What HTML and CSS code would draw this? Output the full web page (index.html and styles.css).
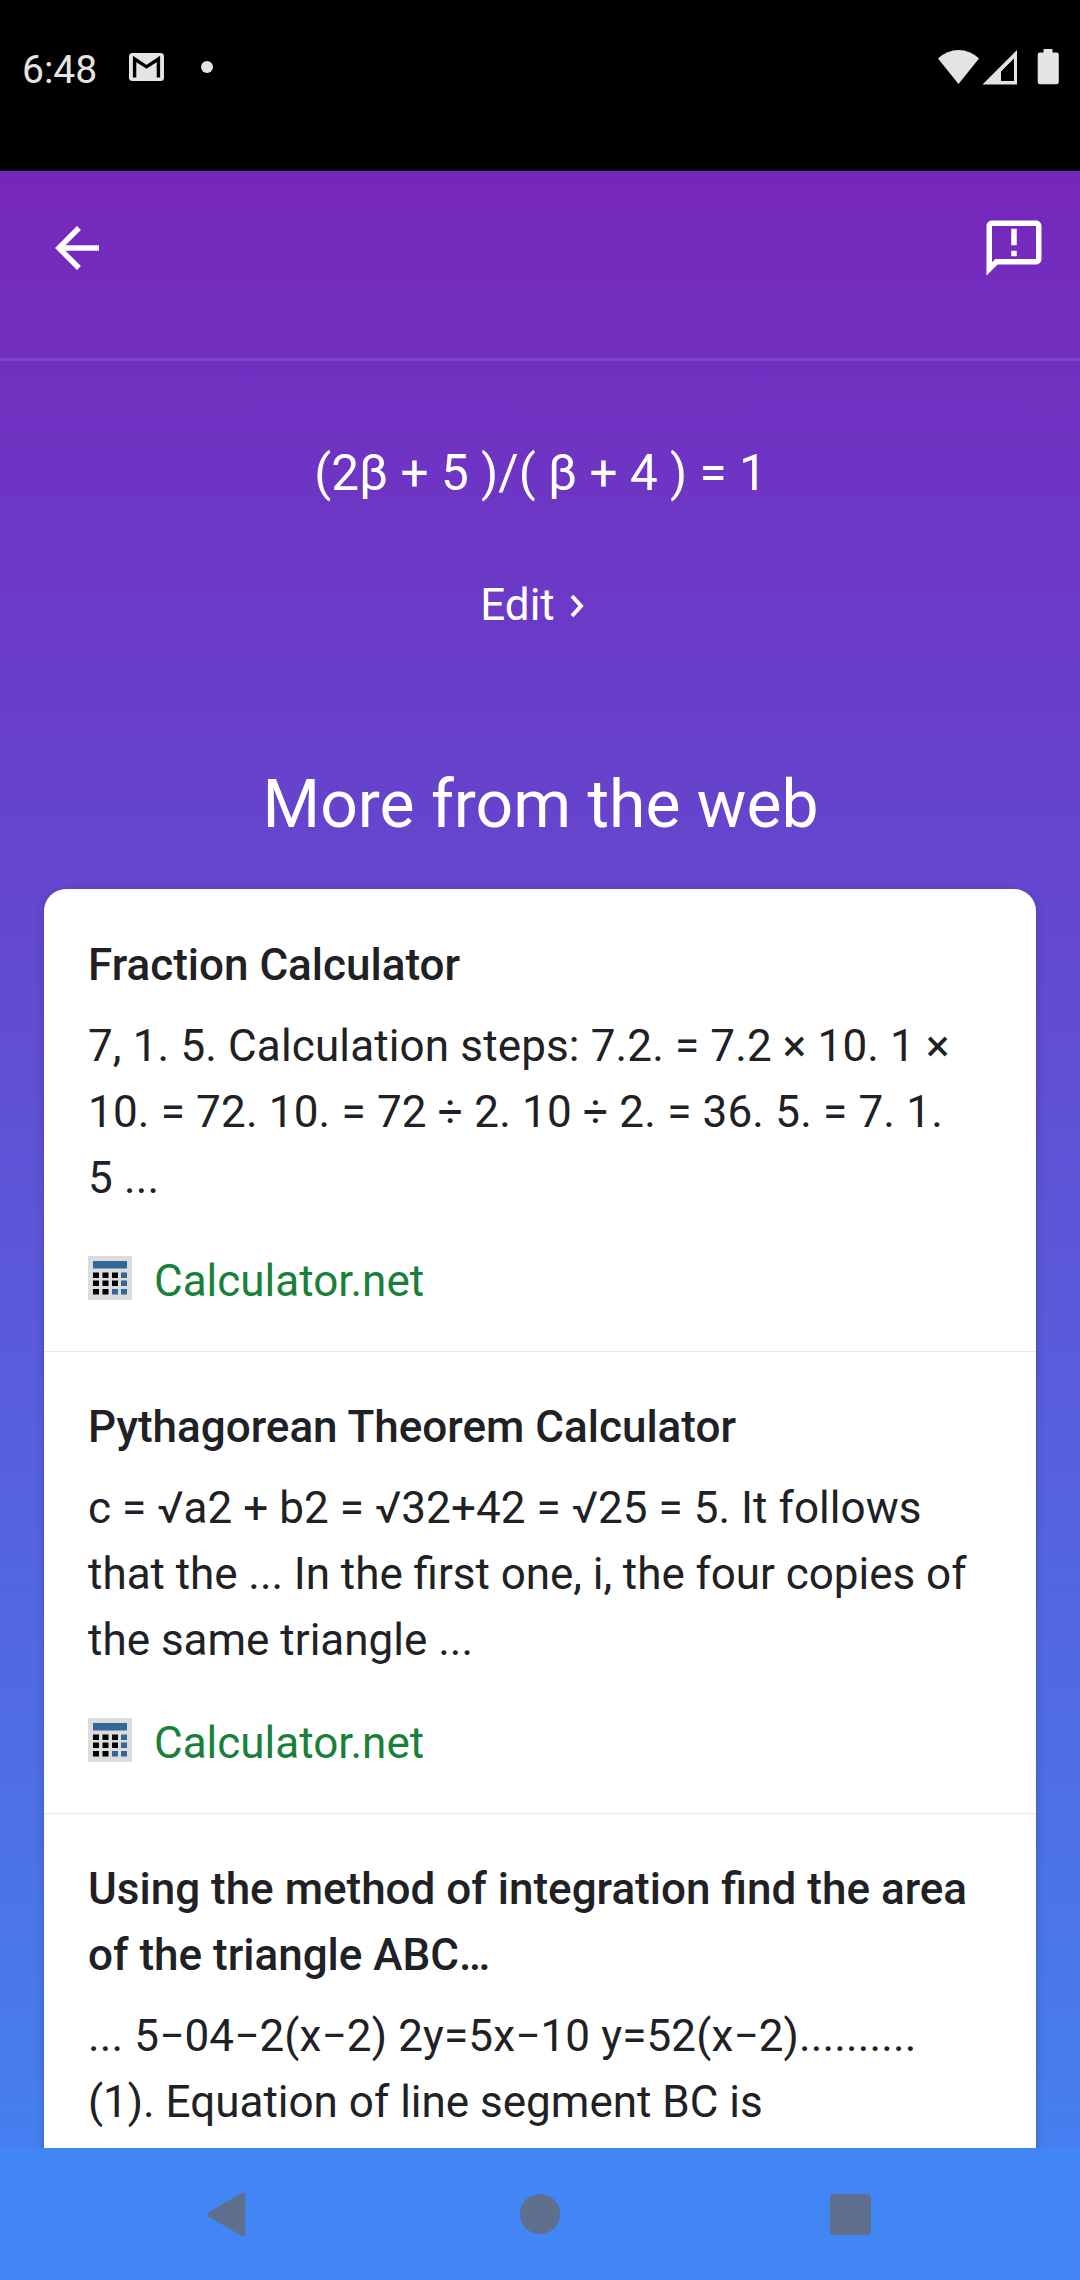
FILE: index.html
```html
<!DOCTYPE html>
<html lang="en">
<head>
<meta charset="utf-8">
<title>Search results</title>
<link rel="stylesheet" href="styles.css">
</head>
<body>
<svg class="defs" width="0" height="0" aria-hidden="true">
  <symbol id="calc" viewBox="0 0 44 44">
    <path fill="#dcdcdc" d="M0 0h44v44H0z"/>
    <path fill="#336699" d="M5 5h34v7.500H5zM33 16.500h6v5.500h-6zM33 24.500h6v5.500h-6zM24 33h6v5.500h-6zM33 33h6v5.500h-6z"/>
    <path fill="#000" d="M5 16.500h6v5.500H5zM14.500 16.500h6v5.500h-6zM24 16.500h6v5.500h-6zM5 24.500h6v5.500H5zM14.500 24.500h6v5.500h-6zM24 24.500h6v5.500h-6zM5 33h6v5.500H5zM14.500 33h6v5.500h-6z"/>
  </symbol>
</svg>
<div class="screen">
  <header class="status">
    <span class="time">6:48</span>
    <svg class="mail" width="35" height="28" viewBox="0 0 35 28"><rect width="35" height="28" rx="3.500" fill="#e4e4e4"/><path d="M5.600 24.500V6L17.500 13.800 29.400 6V24.500" fill="none" stroke="#000" stroke-width="3.400"/></svg>
    <span class="dot"></span>
    <svg class="signals" width="120" height="36" viewBox="0 0 120 36" fill="#e4e4e4"><path d="M0 9.500Q9 1 20.500 1T41 9.500L20.500 35z"/><path fill-rule="evenodd" d="M79 1V35.500H44.500zM76 9.500L63 22.500V32H76z"/><path d="M105.500 0h9v3.500h4q2.300 0 2.300 2.300V33q0 2.300-2.300 2.300H102q-2.300 0-2.300-2.300V5.800q0-2.300 2.300-2.300h3.500z"/></svg>
  </header>
  <main class="content">
    <div class="toolbar">
      <svg class="back" width="66" height="66" viewBox="0 0 24 24" fill="#fff"><path d="M20 11H7.830l5.590-5.590L12 4l-8 8 8 8 1.410-1.410L7.830 13H20z"/></svg>
      <svg class="feedback" width="66" height="66" viewBox="0 0 24 24" fill="#fff"><path fill-rule="evenodd" d="M20 2H4c-1.100 0-2 .900-2 2v18l4-4h14c1.100 0 2-.900 2-2V4c0-1.100-.900-2-2-2zm0 14H5.170L4 17.170V4h16zM11 5h2v6h-2zM11 13h2v2h-2z"/></svg>
    </div>
    <div class="equation">(2β + 5 )/( β + 4 ) = 1</div>
    <div class="edit">Edit <svg width="14" height="24" viewBox="0 0 14 24"><path d="M2 2L11 12 2 22" fill="none" stroke="#fff" stroke-width="4"/></svg></div>
    <h1 class="heading">More from the web</h1>
    <section class="card">
      <article class="item">
        <h2>Fraction Calculator</h2>
        <p><span class="loose">7, 1. 5. Calculation steps: 7.2. = 7.2 × 10. 1 ×</span><br><span class="looser">10. = 72. 10. = 72 ÷ 2. 10 ÷ 2. = 36. 5. = 7. 1.<br>5 ...</span></p>
        <div class="source"><svg width="44" height="44"><use href="#calc"/></svg><span>Calculator.net</span></div>
      </article>
      <article class="item">
        <h2>Pythagorean Theorem Calculator</h2>
        <p><span class="slight">c = √a2 + b2 = √32+42 = √25 = 5. It follows</span><br><span class="tight">that the ... In the first one, i, the four copies of</span><br>the same triangle ...</p>
        <div class="source"><svg width="44" height="44"><use href="#calc"/></svg><span>Calculator.net</span></div>
      </article>
      <article class="item">
        <h2>Using the method of integration find the area<br>of the triangle ABC…</h2>
        <p><span class="loose">... 5−04−2(x−2) 2y=5x−10 y=52(x−2)..........</span><br>(1). Equation of line segment BC is</p>
      </article>
    </section>
  </main>
  <nav class="navbar">
    <svg width="44" height="48" viewBox="0 0 44 48"><path d="M2.500 24.500L36 5V44z" fill="#5f6f8e" stroke="#5f6f8e" stroke-width="4.500" stroke-linejoin="round"/></svg>
    <svg width="44" height="48" viewBox="0 0 44 48"><circle cx="22" cy="24" r="20" fill="#5f6f8e"/></svg>
    <svg width="44" height="48" viewBox="0 0 44 48"><rect x="1" y="4" width="41" height="41" rx="4" fill="#5f6f8e"/></svg>
  </nav>
</div>
</body>
</html>
```
FILE: styles.css
```css
* { box-sizing: border-box; margin: 0; }

body {
  background: #000;
  font-family: Roboto, "Noto Sans", sans-serif;
  font-size: 44px;
  line-height: 66px;
}

svg { display: block; flex: none; }
.defs { position: absolute; }

.screen {
  display: flex;
  flex-direction: column;
  width: 1080px;
  height: 2280px;
  overflow: hidden;
  background: linear-gradient(#7627bb 171px, #4285f4 2280px);
}

.status {
  display: flex;
  align-items: flex-start;
  flex: none;
  height: 171px;
  padding: 0 22px;
  background: #000;
  color: #e4e4e4;
}
.time { width: 107px; padding-top: 50px; font-size: 39px; line-height: 40px; }
.mail { margin-top: 53px; }
.dot { width: 12px; height: 12px; margin: 61px 0 0 37px; border-radius: 50%; background: #e4e4e4; }
.signals { margin: 49px 0 0 auto; overflow: visible; }

.content { flex: 1; min-height: 0; overflow: hidden; color: #fff; }

.toolbar {
  display: flex;
  justify-content: space-between;
  height: 190px;
  padding: 44px 33px 0 44px;
  border-bottom: 3px solid rgba(255, 255, 255, 0.1);
}

.equation { margin-top: 79px; padding-left: 1px; text-align: center; font-size: 49.5px; }
.edit { display: flex; justify-content: center; gap: 15px; margin-top: 66px; padding-right: 16px; }
.edit svg { margin-top: 22px; }
.heading { margin-top: 123px; padding-left: 1px; text-align: center; font-size: 66px; font-weight: 400; line-height: 87px; }

.card {
  margin: 41px 44px 0;
  border-radius: 22px;
  background: #fff;
  color: #202124;
  box-shadow: 0 3px 8px rgba(32, 33, 36, 0.28);
}
.item { height: 463px; padding: 43px 44px 0; border-bottom: 1px solid #e8eaed; }
.item + .item { height: 462px; padding-top: 42px; }
.item h2 { font-size: 44px; font-weight: 500; line-height: 66px; margin-bottom: 15px; white-space: nowrap; }
.item p { white-space: nowrap; }

.slight { letter-spacing: 0.06px; }
.loose { letter-spacing: 0.14px; }
.looser { letter-spacing: 0.18px; }
.tight { word-spacing: -0.2px; }

.source { display: flex; align-items: center; gap: 22px; margin-top: 37px; color: #188038; }
.source svg { position: relative; top: -3px; }

.navbar {
  display: flex;
  justify-content: center;
  gap: 267px;
  flex: none;
  height: 132px;
  padding-top: 42px;
  background: #4285f4;
}
```
